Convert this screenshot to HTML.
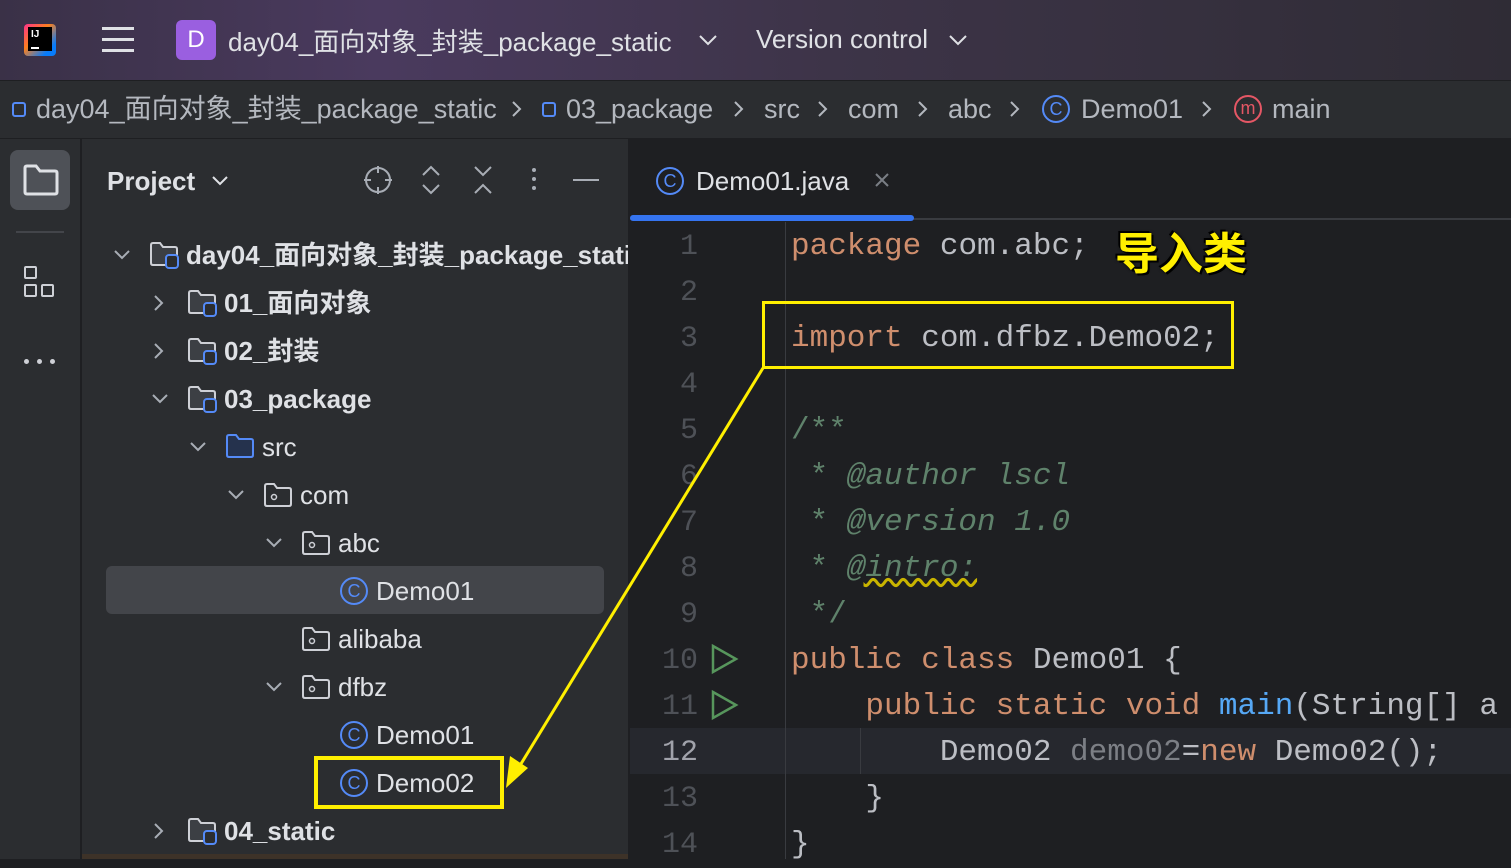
<!DOCTYPE html><html><head><meta charset="utf-8"><style>
*{margin:0;padding:0;box-sizing:border-box}
body{width:1511px;height:859px;overflow:hidden;background:#1e1f22;font-family:"Liberation Sans","Noto Sans CJK SC",sans-serif;position:relative;color:#dfe1e5}
.a{position:absolute;white-space:pre}
.top{left:0;top:0;width:1511px;height:80px;background:linear-gradient(90deg,#3a3147 0%,#4a3a5e 25%,#3d3448 55%,#2f2c35 100%)}
.bc{left:0;top:81px;width:1511px;height:57px;background:#2b2d30}
.b{font-size:27px;color:#b4b8bf;top:94px;line-height:30px}
.side{left:0;top:139px;width:80px;height:720px;background:#2b2d30}
.proj{left:82px;top:139px;width:546px;height:720px;background:#2b2d30}
.t{font-size:26px;color:#dfe1e5;line-height:30px}
.code{font-family:"Liberation Mono","DejaVu Sans Mono",monospace;font-size:31px;line-height:46px}
.ln{font-family:"Liberation Mono",monospace;font-size:30px;color:#4e5157;width:70px;text-align:right;left:628px;line-height:46px}
.k{color:#cf8e6d}.c{color:#5f826b}.ci{color:#5f826b;font-style:italic}.g{color:#bcbec4}
</style></head><body>
<div class="a top"></div>
<div class="a" style="left:24px;top:24px;width:32px;height:32px;background:linear-gradient(135deg,#ff318c,#fc801d 40%,#087cfa 80%);border-radius:4px"></div>
<div class="a" style="left:28px;top:27px;width:24px;height:24px;background:#000;color:#fff;font:bold 10px 'Liberation Sans';padding:2px 3px">IJ<div style="width:8px;height:2px;background:#fff;margin-top:7px"></div></div>
<div class="a" style="left:102px;top:27px;width:32px;height:3px;background:#dfe1e5;box-shadow:0 11px 0 #dfe1e5,0 22px 0 #dfe1e5"></div>
<div class="a" style="left:176px;top:20px;width:40px;height:40px;background:#9a5fe0;border-radius:6px;color:#fff;font-size:24px;text-align:center;line-height:40px">D</div>
<div class="a" style="left:228px;top:22px;font-size:26px;color:#dfe1e5">day04_面向对象_封装_package_static</div>
<svg class="a" style="left:698px;top:33px" width="20" height="14"><path d="M2 3 L10 11 L18 3" fill="none" stroke="#dfe1e5" stroke-width="2"/></svg>
<div class="a" style="left:756px;top:24px;font-size:26px;color:#dfe1e5">Version control</div>
<svg class="a" style="left:948px;top:33px" width="20" height="14"><path d="M2 3 L10 11 L18 3" fill="none" stroke="#dfe1e5" stroke-width="2"/></svg>
<div class="a bc"></div>
<div class="a" style="left:12px;top:102px;width:14px;height:15px;border:2px solid #548af7;border-radius:3px"></div>
<div class="a b" style="left:36px">day04_面向对象_封装_package_static</div>
<div class="a" style="left:542px;top:102px;width:14px;height:15px;border:2px solid #548af7;border-radius:3px"></div>
<div class="a b" style="left:566px">03_package</div>
<div class="a b" style="left:764px">src</div>
<div class="a b" style="left:848px">com</div>
<div class="a b" style="left:948px">abc</div>
<div class="a" style="left:1042px;top:95px;width:28px;height:28px;border:2px solid #548af7;border-radius:50%;color:#548af7;font-size:18px;text-align:center;line-height:24px">C</div>
<div class="a b" style="left:1081px">Demo01</div>
<div class="a" style="left:1234px;top:95px;width:28px;height:28px;border:2px solid #e55765;border-radius:50%;color:#e55765;font-size:18px;text-align:center;line-height:22px">m</div>
<div class="a b" style="left:1272px">main</div>
<svg class="a" style="left:0;top:95px" width="1300" height="30"><g fill="none" stroke="#b4b8bf" stroke-width="2"><path d="M513 7 L520 14 L513 21"/><path d="M735 7 L742 14 L735 21"/><path d="M819 7 L826 14 L819 21"/><path d="M919 7 L926 14 L919 21"/><path d="M1011 7 L1018 14 L1011 21"/><path d="M1203 7 L1210 14 L1203 21"/></g></svg>
<div class="a side"></div>
<div class="a" style="left:10px;top:150px;width:60px;height:60px;background:#4e5157;border-radius:8px"></div>
<svg class="a" style="left:22px;top:163px" width="38" height="34"><path d="M3 5 Q3 3 5 3 H14 L18 8 H33 Q35 8 35 10 V29 Q35 31 33 31 H5 Q3 31 3 29 Z" fill="none" stroke="#dfe1e5" stroke-width="3"/></svg>
<div class="a" style="left:16px;top:231px;width:48px;height:2px;background:#43454a"></div>
<div class="a" style="left:24px;top:266px;width:13px;height:13px;border:2.5px solid #ced0d6;border-radius:2px"></div>
<div class="a" style="left:24px;top:284px;width:13px;height:13px;border:2.5px solid #ced0d6;border-radius:2px"></div>
<div class="a" style="left:41px;top:284px;width:13px;height:13px;border:2.5px solid #ced0d6;border-radius:2px"></div>
<div class="a" style="left:24px;top:359px;width:5px;height:5px;background:#ced0d6;border-radius:3px;box-shadow:13px 0 0 #ced0d6,26px 0 0 #ced0d6"></div>
<div class="a proj"></div>
<div class="a" style="left:107px;top:166px;font-size:26px;font-weight:bold;color:#dfe1e5">Project</div>
<svg class="a" style="left:211px;top:175px" width="18" height="12"><path d="M2 2 L9 9 L16 2" fill="none" stroke="#dfe1e5" stroke-width="2"/></svg>
<svg class="a" style="left:362px;top:164px" width="32" height="32"><circle cx="16" cy="16" r="12" fill="none" stroke="#a8adb5" stroke-width="2"/><path d="M16 2V9M16 23V30M2 16H9M23 16H30" stroke="#a8adb5" stroke-width="2"/></svg>
<svg class="a" style="left:420px;top:165px" width="22" height="30"><path d="M3 10 L11 2 L19 10 M3 20 L11 28 L19 20" fill="none" stroke="#a8adb5" stroke-width="2"/></svg>
<svg class="a" style="left:472px;top:165px" width="22" height="30"><path d="M3 2 L11 10 L19 2 M3 28 L11 20 L19 28" fill="none" stroke="#a8adb5" stroke-width="2"/></svg>
<div class="a" style="left:532px;top:168px;width:4px;height:4px;background:#a8adb5;border-radius:2px;box-shadow:0 9px 0 #a8adb5,0 18px 0 #a8adb5"></div>
<div class="a" style="left:573px;top:179px;width:26px;height:2px;background:#a8adb5"></div>
<div class="a" style="left:106px;top:566px;width:498px;height:48px;background:#43454a;border-radius:6px"></div>
<svg class="a" style="left:0;top:0" width="630" height="859">
<defs><path id="dn" d="M0 0 L7 7 L14 0" fill="none" stroke="#a8adb5" stroke-width="2"/><path id="rt" d="M0 0 L7 7 L0 14" fill="none" stroke="#a8adb5" stroke-width="2"/>
<path id="fo" d="M1 3 Q1 1 3 1 H10 L13 5 H25 Q27 5 27 7 V21 Q27 23 25 23 H3 Q1 23 1 21 Z" fill="none" stroke="#ced0d6" stroke-width="2"/>
<g id="pk"><use href="#fo"/><circle cx="10" cy="14" r="2.5" fill="none" stroke="#ced0d6" stroke-width="1.5"/></g>
<g id="md"><path d="M1 3 Q1 1 3 1 H10 L13 5 H25 Q27 5 27 7 V21 Q27 23 25 23 H3 Q1 23 1 21 Z" fill="#3c3f44" stroke="#ced0d6" stroke-width="2"/><rect x="16" y="13" width="12" height="13" rx="3" fill="#2b2d30" stroke="#548af7" stroke-width="2"/></g></defs>
<use href="#dn" x="115" y="251"/><use href="#md" x="150" y="242"/>
<use href="#rt" x="155" y="296"/><use href="#md" x="188" y="290"/>
<use href="#rt" x="155" y="344"/><use href="#md" x="188" y="338"/>
<use href="#dn" x="153" y="395"/><use href="#md" x="188" y="386"/>
<use href="#dn" x="191" y="443"/><path d="M227 437 Q227 435 229 435 H236 L239 439 H251 Q253 439 253 441 V455 Q253 457 251 457 H229 Q227 457 227 455 Z" fill="#25324d" stroke="#548af7" stroke-width="2"/>
<use href="#dn" x="229" y="491"/><use href="#pk" x="264" y="483"/>
<use href="#dn" x="267" y="539"/><use href="#pk" x="302" y="531"/>
<use href="#pk" x="302" y="627"/>
<use href="#dn" x="267" y="683"/><use href="#pk" x="302" y="675"/>
<use href="#rt" x="155" y="824"/><use href="#md" x="188" y="818"/>
</svg>
<div class="a t" style="left:186px;top:240px;font-weight:bold;width:442px;overflow:hidden">day04_面向对象_封装_package_static</div>
<div class="a t" style="left:224px;top:288px;font-weight:bold">01_面向对象</div>
<div class="a t" style="left:224px;top:336px;font-weight:bold">02_封装</div>
<div class="a t" style="left:224px;top:384px;font-weight:bold">03_package</div>
<div class="a t" style="left:262px;top:432px">src</div>
<div class="a t" style="left:300px;top:480px">com</div>
<div class="a t" style="left:338px;top:528px">abc</div>
<div class="a" style="left:340px;top:577px;width:28px;height:28px;border:2px solid #548af7;border-radius:50%;color:#548af7;font-size:18px;text-align:center;line-height:24px">C</div><div class="a t" style="left:376px;top:576px">Demo01</div>
<div class="a t" style="left:338px;top:624px">alibaba</div>
<div class="a t" style="left:338px;top:672px">dfbz</div>
<div class="a" style="left:340px;top:721px;width:28px;height:28px;border:2px solid #548af7;border-radius:50%;color:#548af7;font-size:18px;text-align:center;line-height:24px">C</div><div class="a t" style="left:376px;top:720px">Demo01</div>
<div class="a" style="left:340px;top:769px;width:28px;height:28px;border:2px solid #548af7;border-radius:50%;color:#548af7;font-size:18px;text-align:center;line-height:24px">C</div><div class="a t" style="left:376px;top:768px">Demo02</div>
<div class="a" style="left:314px;top:756px;width:190px;height:53px;border:4px solid #ffef00"></div>
<div class="a t" style="left:224px;top:816px;font-weight:bold">04_static</div>
<div class="a" style="left:82px;top:854px;width:546px;height:5px;background:#3d3228"></div>
<div class="a" style="left:630px;top:218px;width:881px;height:2px;background:#393b40"></div>
<div class="a" style="left:630px;top:215px;width:284px;height:6px;background:#3574f0;border-radius:3px"></div>
<div class="a" style="left:656px;top:167px;width:28px;height:28px;border:2px solid #548af7;border-radius:50%;color:#548af7;font-size:18px;text-align:center;line-height:24px">C</div>
<div class="a" style="left:696px;top:166px;font-size:26px;color:#dfe1e5">Demo01.java</div>
<svg class="a" style="left:874px;top:172px" width="16" height="16"><path d="M2 2L14 14M14 2L2 14" stroke="#7a7e85" stroke-width="2"/></svg>
<div class="a" style="left:630px;top:728px;width:881px;height:46px;background:#26282e"></div>
<div class="a" style="left:785px;top:222px;width:1px;height:637px;background:#393b40"></div>
<div class="a" style="left:860px;top:728px;width:1px;height:46px;background:#393b40"></div>
<div class="a ln" style="top:224px">1</div><div class="a ln" style="top:270px">2</div><div class="a ln" style="top:316px">3</div><div class="a ln" style="top:362px">4</div><div class="a ln" style="top:408px">5</div><div class="a ln" style="top:454px">6</div><div class="a ln" style="top:500px">7</div><div class="a ln" style="top:546px">8</div><div class="a ln" style="top:592px">9</div><div class="a ln" style="top:638px">10</div><div class="a ln" style="top:684px">11</div><div class="a ln" style="top:730px;color:#a1a3ab">12</div><div class="a ln" style="top:776px">13</div><div class="a ln" style="top:822px">14</div>
<svg class="a" style="left:708px;top:642px" width="32" height="80"><path d="M5 4 L28 17 L5 30 Z" fill="none" stroke="#57965c" stroke-width="2.5"/><path d="M5 50 L28 63 L5 76 Z" fill="none" stroke="#57965c" stroke-width="2.5"/></svg>
<div class="a code" style="left:791px;top:224px"><span class="k">package</span> <span class="g">com.abc;</span></div>
<div class="a" style="left:1115px;top:218px;font:bold 44px 'Noto Sans CJK SC',sans-serif;color:#ffef00;text-shadow:0 0 3px #000,2px 2px 0 #000,-2px -2px 0 #000">导入类</div>
<div class="a code" style="left:791px;top:316px"><span class="k">import</span> <span class="g">com.dfbz.Demo02;</span></div>
<div class="a" style="left:762px;top:301px;width:472px;height:68px;border:3px solid #ffef00"></div>
<div class="a code c" style="left:791px;top:408px">/**</div>
<div class="a code" style="left:791px;top:454px"><span class="c"> * </span><span class="ci">@author lscl</span></div>
<div class="a code" style="left:791px;top:500px"><span class="c"> * </span><span class="ci">@version 1.0</span></div>
<div class="a code" style="left:791px;top:546px"><span class="c"> * </span><span class="ci" style="text-decoration:underline wavy #c9b400">@intro:</span></div>
<div class="a code c" style="left:791px;top:592px"> */</div>
<div class="a code" style="left:791px;top:638px"><span class="k">public class</span> <span class="g">Demo01 {</span></div>
<div class="a code" style="left:791px;top:684px"><span class="k">    public static void</span> <span style="color:#56a8f5">main</span><span class="g">(String[] a</span></div>
<div class="a code" style="left:791px;top:730px"><span class="g">        Demo02 </span><span style="color:#7c7f85">demo02</span><span class="g">=</span><span class="k">new</span><span class="g"> Demo02();</span></div>
<div class="a code g" style="left:791px;top:776px">    }</div>
<div class="a code g" style="left:791px;top:822px">}</div>
<svg class="a" style="left:0;top:0" width="1511" height="859"><line x1="763" y1="368" x2="516" y2="772" stroke="#ffef00" stroke-width="3"/><path d="M506 788 L510 756 L528 768 Z" fill="#ffef00"/></svg>
</body></html>
